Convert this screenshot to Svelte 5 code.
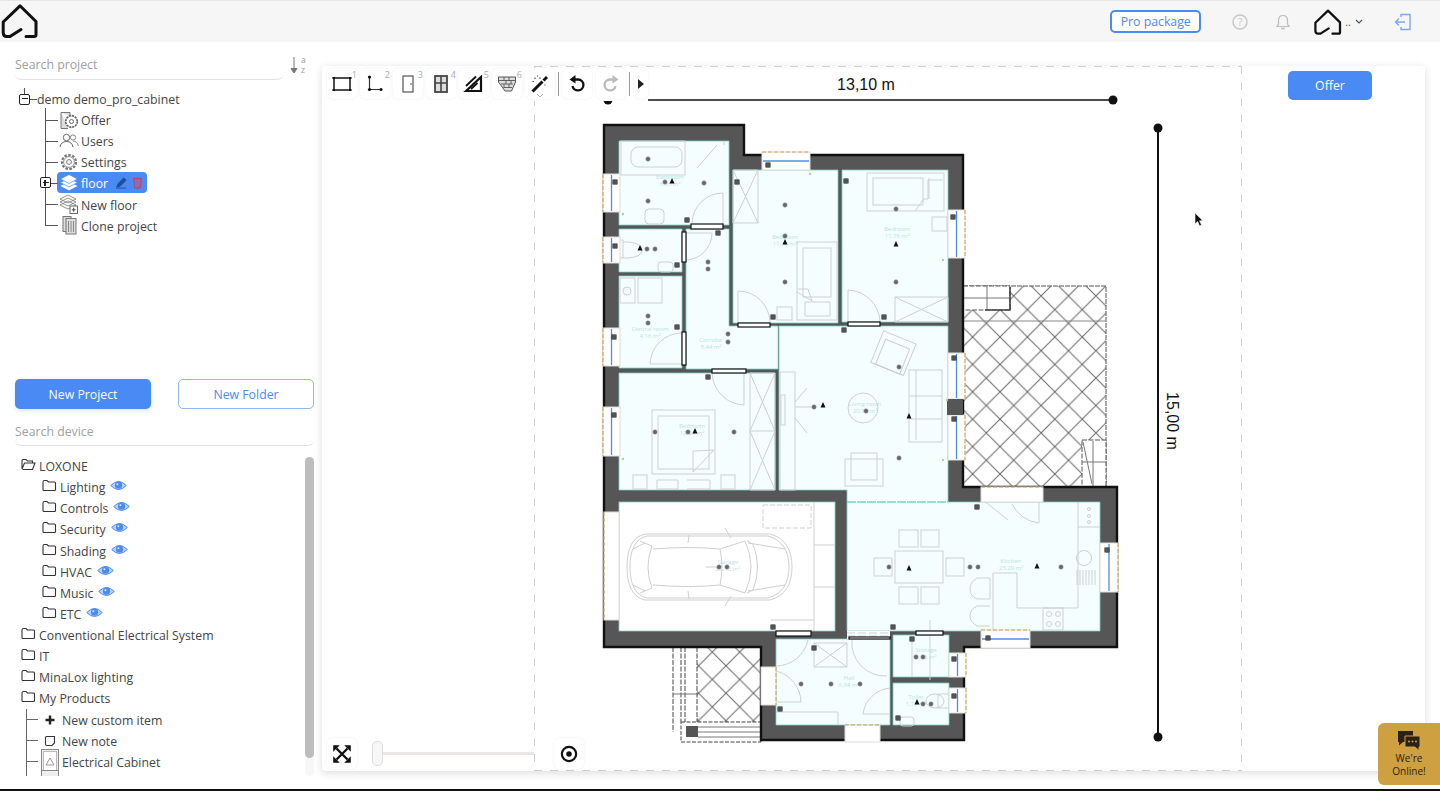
<script>
  const treeItems = [
    { label: 'Offer', icon: 'offer' },
    { label: 'Users', icon: 'users' },
    { label: 'Settings', icon: 'gear' },
    { label: 'floor', icon: 'layers', active: true },
    { label: 'New floor', icon: 'newfloor' },
    { label: 'Clone project', icon: 'clone' }
  ];
  const loxone = ['Lighting', 'Controls', 'Security', 'Shading', 'HVAC', 'Music', 'ETC'];
  const folders = ['Conventional Electrical System', 'IT', 'MinaLox lighting', 'My Products'];
  const tools = [
    { id: 'rect', n: 1 }, { id: 'corner', n: 2 }, { id: 'door', n: 3 },
    { id: 'window', n: 4 }, { id: 'ruler', n: 5 }, { id: 'brick', n: 6 }, { id: 'wand' }
  ];

  const rooms = [
    '619,141 729,141 729,225 619,225',
    '619,229 682,229 682,272 619,272',
    '619,276 682,276 682,368 619,368',
    '686,229 729,229 729,326 778,326 778,369 686,369',
    '733,170 838,170 838,323 733,323',
    '842,170 948,170 948,322 842,322',
    '619,373 775,373 775,490 619,490',
    '779,326 948,326 948,502 1100,502 1100,631 847,631 847,490 779,490',
    '776,639 890,639 890,725 776,725',
    '893,635 949,635 949,677 893,677',
    '893,683 949,683 949,725 893,725'
  ];
  const windows = [
    [603, 174, 17, 38, 'v'], [603, 237, 17, 26, 'v'], [603, 328, 17, 38, 'v'], [603, 407, 17, 49, 'v'],
    [948, 210, 17, 48, 'v'], [948, 353, 17, 46, 'v'], [948, 415, 17, 45, 'v'],
    [762, 152, 48, 18, 'h'], [1100, 543, 18, 49, 'v'], [981, 630, 49, 18, 'h'],
    [949, 653, 17, 24, 'v'], [949, 688, 17, 25, 'v'],
    [604, 512, 15, 108, ''], [981, 487, 62, 15, ''], [761, 667, 15, 38, ''], [845, 725, 35, 17, '']
  ];
  const doors = [
    [691, 224, 32, 5], [682, 232, 4, 30], [682, 332, 4, 33], [712, 369, 34, 4],
    [738, 323, 32, 4], [848, 322, 32, 4], [776, 631, 35, 5], [916, 631, 27, 4], [849, 637, 41, 2]
  ];
  const dots = [
    [648, 159], [704, 183], [648, 201], [665, 182], [785, 205], [785, 282], [896, 209], [896, 282],
    [647, 249], [655, 249], [708, 269], [708, 262], [648, 323], [648, 316], [728, 342], [728, 334],
    [655, 432], [734, 432], [688, 432], [814, 407], [866, 411], [899, 367], [899, 458], [719, 567],
    [727, 567], [889, 567], [970, 567], [978, 567], [1061, 567], [801, 684], [831, 684], [860, 684],
    [916, 657], [923, 657], [923, 704], [931, 704], [785, 236]
  ];
  const bells = [
    [672, 181], [785, 242], [896, 244], [640, 248], [695, 431], [823, 405], [909, 416], [909, 568], [1037, 566], [917, 702]
  ];
  const squares = [
    [615, 182], [615, 246], [614, 337], [614, 415], [953, 217], [954, 358], [954, 419], [768, 165],
    [687, 220], [718, 233], [737, 182], [846, 181], [677, 265], [677, 327], [773, 317], [884, 317],
    [844, 330], [708, 377], [1107, 550], [954, 659], [954, 696], [988, 638], [977, 507], [773, 627],
    [893, 627], [814, 648], [780, 709], [898, 718], [912, 639]
  ];
  const greens = [[623, 214], [810, 174], [943, 260], [623, 459], [943, 460], [947, 400]];
  const labels = [
    [670, 179, 'Bathroom'], [670, 186, '6,05 m²'], [785, 239, 'Bedroom'], [785, 246, '11,76 m²'],
    [897, 231, 'Bedroom'], [897, 238, '11,76 m²'], [650, 331, 'Central room'], [650, 338, '4,16 m²'],
    [711, 342, 'Corridor'], [711, 349, '5,44 m²'], [692, 428, 'Bedroom'], [692, 435, '12,24 m²'],
    [865, 406, 'Living room'], [865, 413, '20,10 m²'], [1011, 563, 'Kitchen'], [1011, 570, '23,29 m²'],
    [728, 564, 'Garage'], [728, 571, '22,12 m²'], [849, 680, 'Hall'], [849, 687, '6,94 m²'],
    [926, 652, 'Storage'], [926, 659, '1,92 m²'], [916, 699, 'Toilet'], [916, 706, '1,76 m²']
  ];
</script>

{#snippet folder(open)}
  <svg class="folder" viewBox="0 0 15 13" aria-hidden="true">
    {#if open}
      <path d="M1 11V2.5Q1 1.5 2 1.5H5L6.5 3H11.5V5M1 11L3.5 5H14L11.5 11.5H1.5" />
    {:else}
      <path d="M1 3Q1 1.5 2.5 1.5H5L6.5 3H12.5Q13.5 3 13.5 4V10.5Q13.5 11.5 12.5 11.5H2Q1 11.5 1 10.5Z" />
    {/if}
  </svg>
{/snippet}

{#snippet eye()}
  <svg class="eye" viewBox="0 0 17 11" aria-hidden="true">
    <path d="M.7 5.5Q8.5-2.5 16.3 5.5Q8.5 13.5.7 5.5Z" fill="#b9d3fb" stroke="#4a8af4" stroke-width="1" />
    <circle cx="8.5" cy="5.2" r="3.6" fill="#4a8af4" />
    <circle cx="7.4" cy="4.2" r="1" fill="#dce9fe" />
  </svg>
{/snippet}

{#snippet logo(size)}
  <svg width={size} height={size} viewBox="0 0 40 40" aria-hidden="true">
    <path d="M26 35.5H34Q36 35.5 36 33.5V20.5L20 4.8L3.2 21V31.5Q3.2 35.5 7 35.5H10L21 28.5" fill="none" stroke="#111" stroke-width="3" stroke-linecap="round" stroke-linejoin="round" />
  </svg>
{/snippet}

{#snippet treeIcon(kind)}
  <svg class="ticon" viewBox="0 0 20 20" aria-hidden="true">
    {#if kind === 'offer'}
      <path d="M2 2.5H11V6M2 2.5V18.5H9" fill="#ddd" stroke="#777" />
      <circle cx="12.5" cy="11.5" r="5.8" fill="#fff" stroke="#666" stroke-width="1.7" stroke-dasharray="2.2 .8" />
      <circle cx="12.5" cy="11.5" r="2" fill="none" stroke="#666" />
    {:else if kind === 'users'}
      <circle cx="7.5" cy="6.5" r="3.2" fill="none" stroke="#666" />
      <path d="M1 16Q2 10.5 7.5 10.5T14 16" fill="none" stroke="#666" />
      <circle cx="14" cy="6.5" r="2.6" fill="none" stroke="#888" />
      <path d="M14 10Q18 10 19.5 15" fill="none" stroke="#888" />
    {:else if kind === 'gear'}
      <circle cx="10" cy="10" r="7" fill="none" stroke="#777" stroke-width="2.2" stroke-dasharray="2.6 1.4" />
      <circle cx="10" cy="10" r="5.4" fill="none" stroke="#777" stroke-width=".8" />
      <circle cx="10" cy="10" r="2.4" fill="none" stroke="#777" />
    {:else if kind === 'layers'}
      <path d="M1.5 13L10 17.5L18.5 13L10 8.5Z" fill="#fff" />
      <path d="M1.5 9.5L10 14L18.5 9.5L10 5Z" fill="#fff" stroke="#4a8af4" stroke-width=".7" />
      <path d="M1.5 6L10 10.5L18.5 6L10 1.5Z" fill="#fff" stroke="#4a8af4" stroke-width=".7" />
    {:else if kind === 'newfloor'}
      <path d="M1 11L9 15L17 11L9 7Z M1 8L9 12L17 8L9 4Z M1 5L9 9L17 5L9 1Z" fill="#fff" stroke="#777" stroke-width=".8" />
      <rect x="11" y="12" width="7.5" height="7.5" fill="#fff" stroke="#666" />
      <path d="M14.7 13.8V17.8M12.8 15.8H16.6" stroke="#444" />
    {:else}
      <rect x="4" y="1.5" width="8" height="15" fill="#ddd" stroke="#777" />
      <rect x="7" y="3.5" width="10" height="15.5" fill="#ddd" stroke="#777" />
      <path d="M9.5 6V17M12 6V17M14.5 6V17" stroke="#888" />
    {/if}
  </svg>
{/snippet}

{#snippet toolIcon(id)}
  <svg class="tool-svg" viewBox="0 0 22 22" aria-hidden="true">
    {#if id === 'rect'}
      <rect x="3" y="5" width="16" height="12" fill="none" stroke="#222" stroke-width="1.6" />
      <path d="M1.5 5H4M18 5H20.5M1.5 17H4M18 17H20.5" stroke="#111" stroke-width="2" />
    {:else if id === 'corner'}
      <path d="M5.5 4V16.5H17" fill="none" stroke="#333" stroke-width="1.2" />
      <circle cx="5.5" cy="4" r="1.6" fill="#111" /><circle cx="5.5" cy="16.5" r="1.6" fill="#111" /><circle cx="17" cy="16.5" r="1.6" fill="#111" />
    {:else if id === 'door'}
      <rect x="6" y="3" width="10" height="16" fill="none" stroke="#444" stroke-width="1.1" />
      <circle cx="14" cy="11" r=".8" fill="#333" />
    {:else if id === 'window'}
      <rect x="5" y="3" width="12" height="16" fill="#ddd" stroke="#444" stroke-width="1.8" />
      <path d="M11 3V19M5 10H17" stroke="#444" stroke-width="1.6" />
    {:else if id === 'ruler'}
      <path d="M3 18L18 4V18Z" fill="none" stroke="#111" stroke-width="2.2" />
      <path d="M3 13L13 3.5M8 16L14.5 10" stroke="#111" stroke-width="1.8" />
    {:else if id === 'brick'}
      <path d="M2.5 4H19.5V9L15.5 18H9L2.5 9Z" fill="#ddd" stroke="#555" />
      <path d="M3 7.5H19M5 11H17M7.5 14.5H16M8 4V7.5M13 4V7.5M10 7.5V11M15 7.5V11M8 11V14.5M13 11V14.5" stroke="#555" stroke-width=".9" />
    {:else if id === 'wand'}
      <path d="M3.5 18.5L13.5 8.5" stroke="#111" stroke-width="3" />
      <path d="M14.5 7.5L18 4" stroke="#111" stroke-width="3" />
      <path d="M6 4.5V6M8.5 2.5V3.5M11 4.5V6M3.5 8.5H5M16 11.5V12.5" stroke="#444" stroke-width="1.1" />
    {:else if id === 'undo'}
      <path d="M7.5 6.5H12.5A5.5 5.5 0 1 1 6.5 13" fill="none" stroke="#111" stroke-width="2.3" />
      <path d="M9.5 2L3.5 6.5L9.5 10.5Z" fill="#111" />
    {:else if id === 'redo'}
      <path d="M14.5 6.5H9.5A5.5 5.5 0 1 0 15.5 13" fill="none" stroke="#bbb" stroke-width="2.3" />
      <path d="M12.5 2L18.5 6.5L12.5 10.5Z" fill="#bbb" />
    {/if}
  </svg>
{/snippet}

<div class="page">
  <header class="topbar">
    <div class="brand">{@render logo(40)}</div>
    <div class="top-actions">
      <button class="pro">Pro package</button>
      <svg class="help" viewBox="0 0 16 16" aria-hidden="true">
        <circle cx="8" cy="8" r="7" fill="none" stroke="#c6c6c6" stroke-width="1.4" />
        <text x="8" y="11.6" text-anchor="middle">?</text>
      </svg>
      <svg class="bell" viewBox="0 0 16 16" aria-hidden="true">
        <path d="M8 1.5Q3.8 1.5 3.5 6V10L2 12.5H14L12.5 10V6Q12.2 1.5 8 1.5ZM6.3 14Q8 15.5 9.7 14" fill="none" stroke="#bbb" stroke-width="1.2" />
      </svg>
      <div class="user">{@render logo(30)}<span class="dots">..</span>
        <svg class="chev" viewBox="0 0 8 5" aria-hidden="true"><path d="M1 1L4 4L7 1" fill="none" stroke="#555" stroke-width="1.2" /></svg>
      </div>
      <svg class="exit" viewBox="0 0 18 18" aria-hidden="true">
        <path d="M7 4V1.5H16V16.5H7V14" fill="none" stroke="#7aa9f2" stroke-width="1.4" />
        <path d="M11 9H2M5 5.5L1.5 9L5 12.5" fill="none" stroke="#7aa9f2" stroke-width="1.4" />
      </svg>
    </div>
  </header>

  <main class="main">
    <aside class="sidebar">
      <section class="project">
        <div class="search-row">
          <div class="search">Search project</div>
          <div class="sort">
            <svg viewBox="0 0 10 20" aria-hidden="true"><path d="M4 2V17M1 13.5L4 18L7 13.5Z" fill="#777" stroke="#777" /></svg>
            <span><i>a</i><i>z</i></span>
          </div>
        </div>
        <div class="root-row">
          <span class="box minus"></span><span class="hline"></span><span class="hline2"></span>
          <span class="txt">demo demo_pro_cabinet</span>
        </div>
        <ul class="tree">
          {#each treeItems as item}
            <li>
              {#if item.active}<span class="box plus"></span>{/if}
              <span class="node" class:active={item.active}>
                {@render treeIcon(item.icon)}
                <span class="txt">{item.label}</span>
                {#if item.active}
                  <svg class="mini" viewBox="0 0 14 14" aria-hidden="true"><path d="M2 12L3 8.5L9.5 2L12 4.5L5.5 11ZM1 13H12" fill="#1f4f96" stroke="#1f4f96" /></svg>
                  <svg class="mini" viewBox="0 0 14 14" aria-hidden="true"><path d="M3 3H11L10 13H4ZM2 2.5H12" fill="#8d6ea8" stroke="#c2415e" /></svg>
                {/if}
              </span>
            </li>
          {/each}
        </ul>
      </section>

      <div class="btns">
        <button class="primary">New Project</button>
        <button class="outline">New Folder</button>
      </div>
      <div class="search device-search">Search device</div>

      <div class="devices">
        <div class="scroll-track"><div class="scroll-thumb"></div></div>
        <div class="drow">{@render folder(true)}<span class="txt">LOXONE</span></div>
        {#each loxone as name}
          <div class="drow sub">{@render folder(false)}<span class="txt">{name}</span>{@render eye()}</div>
        {/each}
        {#each folders as name}
          <div class="drow">{@render folder(false)}<span class="txt">{name}</span></div>
        {/each}
        <ul class="products">
          <li>
            <svg class="pi" viewBox="0 0 12 12" aria-hidden="true"><path d="M6 1.5V10.5M1.5 6H10.5" stroke="#222" stroke-width="2.4" /></svg>
            <span class="txt">New custom item</span>
          </li>
          <li>
            <svg class="pi" viewBox="0 0 12 12" aria-hidden="true"><path d="M2.5 1.5H10.5V8L8 10.5H3Q1.5 10.5 1.5 9V2.5Q1.5 1.5 2.5 1.5Z" fill="none" stroke="#333" stroke-width="1.1" /></svg>
            <span class="txt">New note</span>
          </li>
          <li>
            <svg class="pi cab" viewBox="0 0 18 26" aria-hidden="true">
              <rect x=".5" y=".5" width="17" height="25" fill="#eee" stroke="#888" />
              <rect x="2.5" y="2.5" width="13" height="20" fill="#fff" stroke="#bbb" />
              <path d="M9 9L13 16H5Z" fill="none" stroke="#999" />
            </svg>
            <span class="txt">Electrical Cabinet</span>
          </li>
          <li>
            <svg class="pi cab" viewBox="0 0 18 26" aria-hidden="true"><rect x=".5" y=".5" width="17" height="25" fill="#eee" stroke="#888" /></svg>
          </li>
        </ul>
      </div>
    </aside>

    <section class="canvas">
      <svg class="plan" viewBox="322 66 1103 705" aria-label="Floor plan">
        <defs>
          <pattern id="tile" x="1000" y="337" width="27.4" height="27.4" patternUnits="userSpaceOnUse">
            <path d="M0 0L27.4 27.4M27.4 0L0 27.4" stroke="#666" stroke-width="1" />
          </pattern>
        </defs>

        <!-- page limits -->
        <path d="M534.5 66V771M1241.5 66V771M534 66.5H1241M534 770.5H1241" fill="none" stroke="#d0d0d0" stroke-dasharray="8 8" />

        <!-- terraces -->
        <rect x="963" y="286" width="143" height="201" fill="url(#tile)" stroke="#555" stroke-dasharray="5 1" />
        <path d="M963 321H1106" stroke="#888" />
        <rect x="963" y="286" width="47" height="24" fill="#fff" stroke="#555" stroke-dasharray="5 1.5" />
        <path d="M987 285V310M963 298H1010" stroke="#777" />
        <path d="M1010 287V310H985" fill="none" stroke="#444" stroke-width="1.6" />
        <rect x="1082" y="440" width="24" height="47" fill="#fff" stroke="#555" stroke-dasharray="5 1.5" />
        <path d="M1082 462H1107M1093 441V487M1083 442L1092 484" stroke="#777" />

        <rect x="697" y="647" width="64" height="75" fill="url(#tile)" />
        <path d="M673 647V732M681 647V722M685 647V722M697 647V722" stroke="#444" stroke-dasharray="5 1.5" fill="none" />
        <path d="M673 694H697" stroke="#777" />
        <rect x="681" y="722" width="80" height="20" fill="#fff" stroke="#444" stroke-dasharray="4 1.5" />
        <path d="M698 727H761M698 732H761M698 737H761" stroke="#777" />
        <rect x="686" y="726" width="12" height="11" fill="#555" />

        <!-- walls -->
        <polygon points="604,125 744,125 744,155 963,155 963,487 1117,487 1117,647 964,647 964,740 761,740 761,647 604,647" fill="#565656" stroke="#111" stroke-width="2.4" />

        <!-- rooms -->
        {#each rooms as r}
          <polygon points={r} fill="#f5fefe" stroke="#7ecfc8" stroke-width=".8" />
        {/each}
        <rect x="619" y="502" width="216" height="129" fill="#fff" stroke="#7ecfc8" stroke-width=".8" />
        <rect x="847" y="631" width="43" height="8" fill="#fbfefe" />
        <path d="M847 502H948" stroke="#7ecfc8" stroke-width="1.4" stroke-dasharray="9 1" />

        <!-- furniture -->
        <g fill="none" stroke="#cfcfcf" stroke-width="1">
          <rect x="621" y="141" width="64" height="34" />
          <rect x="631" y="147" width="51" height="20" rx="7" />
          <path d="M697 168L717 145M724 145V141" />
          <rect x="645" y="209" width="19" height="15" rx="4" />
          <path d="M723 193A31 31 0 0 0 692 223M723 193V224M712 233A27 27 0 0 1 686 260M686 233H712M682 333A32 32 0 0 0 650 364H682" />
          <path d="M733 170H758V223H733ZM733 223L758 170M733 170L758 223" />
          <rect x="797" y="242" width="40" height="78" /><rect x="803" y="248" width="28" height="49" />
          <path d="M798 289H808L812 301L797 292M805 302H830V316H805Z" />
          <rect x="777" y="307" width="15" height="13" />
          <path d="M738 291A32 32 0 0 1 770 323M738 291V323" />
          <rect x="867" y="173" width="77" height="38" /><rect x="873" y="178" width="50" height="27" />
          <path d="M915 211L924 199H928V180H943M929 199V178" />
          <path d="M895 297H948V322H895ZM895 297L948 322M895 322L948 297" />
          <rect x="932" y="217" width="15" height="14" />
          <path d="M848 290A33 33 0 0 1 880 322M848 290V322" />
          <rect x="620" y="278" width="15" height="25" /><circle cx="627" cy="291" r="4" /><rect x="638" y="278" width="24" height="25" />
          <path d="M620 240H623V258H620M623 242H628Q642 243 642 250Q642 257 628 258H623" />
          <rect x="658" y="262" width="15" height="10" rx="3" />
          <rect x="652" y="410" width="63" height="64" /><rect x="658" y="416" width="51" height="53" />
          <path d="M693 472L693 451L714 450ZM657 480H678V489H657ZM687 480H710V489H687" />
          <rect x="633" y="475" width="14" height="14" /><rect x="721" y="475" width="14" height="14" />
          <path d="M750 373H775V490H750ZM750 431H775M750 373L775 431M775 373L750 431M750 431L775 490M775 431L750 490" />
          <path d="M712 373A33 33 0 0 0 744 405V373" />
          <rect x="909" y="370" width="33" height="72" /><path d="M916 370V440M909 396H942M909 419H942" />
          <rect x="780" y="372" width="15" height="118" /><rect x="781" y="395" width="4" height="30" />
          <path d="M795 402L807 388M795 418L807 433M795 407H814" />
          <g transform="rotate(22 893 353)"><rect x="876" y="336" width="35" height="34" /><rect x="881" y="343" width="26" height="27" /></g>
          <circle cx="863" cy="408" r="15" />
          <rect x="845" y="459" width="38" height="27" /><rect x="851" y="453" width="26" height="27" />
          <rect x="895" y="551" width="48" height="32" />
          <rect x="899" y="530" width="19" height="17" /><rect x="921" y="530" width="18" height="17" />
          <rect x="899" y="587" width="19" height="17" /><rect x="921" y="587" width="18" height="17" />
          <rect x="874" y="558" width="18" height="18" /><rect x="946" y="558" width="18" height="18" />
          <path d="M993 631V573H1017V608H1078V502M1078 527H1100M993 631" />
          <path d="M990 578H977Q970 582 970 589Q970 596 977 599H990ZM990 606H977Q970 609 970 616Q970 622 977 626H990" />
          <rect x="1043" y="608" width="20" height="22" />
          <circle cx="1049" cy="614" r="2.5" /><circle cx="1058" cy="614" r="2.5" /><circle cx="1049" cy="624" r="2.5" /><circle cx="1058" cy="624" r="2.5" />
          <circle cx="1084" cy="558" r="7.5" />
          <path d="M1080 570V585M1083 570V585M1086 570V585M1089 570V585M1092 570V585M1095 570V585M1077 570V585" />
          <circle cx="1089" cy="509" r="1.5" /><circle cx="1089" cy="516" r="1.5" /><circle cx="1089" cy="522" r="1.5" />
          <path d="M983 500L1008 520M1012 504A34 34 0 0 0 1039 523V502M1022 630V640" />
          <path d="M814 643H847V667H814ZM814 643L847 667M847 643L814 667" />
          <path d="M776 671A33 33 0 0 1 801 702H776M808 640A33 33 0 0 1 776 666M852 640A33 33 0 0 0 887 676M890 688A30 30 0 0 0 863 714H890M776 712H838V725" />
          <path d="M912 639V677M930 620V680" />
          <path d="M950 708H938V694H950" /><ellipse cx="935" cy="701" rx="9" ry="7" />
          <rect x="900" y="717" width="14" height="9" rx="3" />
          <path d="M814 502V631M814 545H835M814 587H835M771 620H814" />
          <rect x="763" y="505" width="48" height="23" stroke-dasharray="5 2" />
          <path d="M847 633H890M847 636H890" stroke-dasharray="8 3" />
          <!-- car -->
          <path d="M645 534H770Q792 540 792 567Q792 594 770 600H645Q627 596 627 567Q627 538 645 534Z" />
          <path d="M647 536H768Q789 542 789 567Q789 592 768 598H647Q630 594 630 567Q630 540 647 536Z" />
          <path d="M653 549Q690 546 720 549Q724 567 720 585Q690 588 653 585" />
          <path d="M652 546Q644 567 652 588" />
          <path d="M720 549L745 541Q757 567 745 593L720 585" />
          <path d="M748 543L785 549M748 591L785 585M747 541L753 544Q762 567 753 590L747 593" />
          <path d="M725 528L731 538M725 606L731 596M689 535L688 543M689 599L688 591M633 549L645 543M633 585L645 591M652 546L640 541M652 588L640 593" />
          <path d="M706 567H717" />
        </g>

        <!-- openings -->
        {#each windows as w}
          <rect x={w[0]} y={w[1]} width={w[2]} height={w[3]} fill="#fff" stroke="#dcdcd4" stroke-width="1" />
          {#if w[4] === 'v'}
            <path d="M{w[0] + w[2] / 2} {w[1] + 1}V{w[1] + w[3] - 1}" stroke="#4a90e2" stroke-width="1.3" />
          {:else if w[4] === 'h'}
            <path d="M{w[0] + 1} {w[1] + w[3] / 2}H{w[0] + w[2] - 1}" stroke="#4a90e2" stroke-width="1.3" />
          {/if}
          {#if w[2] < w[3]}
            <path d="M{w[0] < 700 ? w[0] : w[0] + w[2]} {w[1]}v{w[3]}" stroke="#c9a24e" stroke-dasharray="4 2" />
          {:else}
            <path d="M{w[0]} {w[1]}h{w[2]}" stroke="#c9a24e" stroke-dasharray="4 2" />
          {/if}
        {/each}
        {#each doors as d}
          <rect x={d[0]} y={d[1]} width={d[2]} height={d[3]} fill="#fff" stroke="#111" stroke-width="1.2" />
        {/each}
        <rect x="947" y="399" width="16" height="16" fill="#565656" />

        <!-- devices -->
        {#each labels as l}
          <text class="room-label" x={l[0]} y={l[1]}>{l[2]}</text>
        {/each}
        {#each greens as g}
          <circle cx={g[0]} cy={g[1]} r="1.2" fill="#a5d98a" />
        {/each}
        {#each dots as d}
          <circle cx={d[0]} cy={d[1]} r="2.2" fill="#666" stroke="#999" stroke-width=".6" />
        {/each}
        {#each bells as b}
          <path d="M{b[0] - 2.5} {b[1] + 2.5}L{b[0]} {b[1] - 3}L{b[0] + 2.5} {b[1] + 2.5}Z" fill="#111" />
        {/each}
        {#each squares as s}
          <rect x={s[0] - 2.2} y={s[1] - 2.2} width="4.4" height="4.4" fill="#555" stroke="#222" stroke-width=".5" />
        {/each}

        <!-- dimensions -->
        <path d="M608 100H1113" stroke="#111" stroke-width="1.6" />
        <circle cx="608" cy="100" r="4.5" fill="#111" /><circle cx="1113" cy="100" r="4.5" fill="#111" />
        <text class="dim" x="866" y="90">13,10 m</text>
        <path d="M1158 128V737" stroke="#111" stroke-width="2" />
        <circle cx="1158" cy="128" r="4.5" fill="#111" /><circle cx="1158" cy="737" r="4.5" fill="#111" />
        <text class="dim" transform="translate(1167 421) rotate(90)">15,00 m</text>
      </svg>

      <div class="toolbar">
        {#each tools as t}
          <div class="tool">
            {@render toolIcon(t.id)}
            {#if t.n}<sup>{t.n}</sup>{/if}
            {#if t.id === 'wand'}
              <svg class="caret" viewBox="0 0 8 5" aria-hidden="true"><path d="M1 1L4 4L7 1" fill="none" stroke="#aaa" /></svg>
            {/if}
          </div>
        {/each}
        <span class="sep"></span>
        <div class="tool">{@render toolIcon('undo')}</div>
        <div class="tool redo">{@render toolIcon('redo')}</div>
        <span class="sep"></span>
        <div class="tool narrow"><svg viewBox="0 0 8 12" width="8" height="12" aria-hidden="true"><path d="M1 1L7 6L1 11Z" fill="#222" /></svg></div>
      </div>

      <button class="offer">Offer</button>

      <div class="zoombar">
        <div class="tool">
          <svg class="tool-svg" viewBox="0 0 20 20" aria-hidden="true">
            <path d="M5 5L15 15M15 5L5 15" stroke="#111" stroke-width="2.2" />
            <path d="M2 2H8L2 8ZM18 2H12L18 8ZM2 18H8L2 12ZM18 18H12L18 12Z" fill="#111" />
          </svg>
        </div>
        <div class="slider"><span class="thumb"></span><span class="rail"></span></div>
        <div class="tool">
          <svg class="tool-svg" viewBox="0 0 20 20" aria-hidden="true">
            <circle cx="10" cy="10" r="6.5" fill="none" stroke="#111" stroke-width="2" />
            <circle cx="10" cy="10" r="2.5" fill="#111" />
          </svg>
        </div>
      </div>

      <svg class="cursor" viewBox="0 0 10 16" aria-hidden="true">
        <path d="M1 1V12L3.7 9.6L5.5 14L7.5 13L5.6 8.8H9Z" fill="#111" stroke="#fff" stroke-width=".6" />
      </svg>
    </section>
  </main>

  <aside class="chat">
    <svg viewBox="0 0 24 22" width="24" height="22" aria-hidden="true">
      <path d="M1 1H16V12H6L2 15.5V12H1Z" fill="#2a2215" />
      <path d="M8 6H23V17H22V20.5L18 17H8Z" fill="#2a2215" stroke="#cfa040" />
      <circle cx="12" cy="11.5" r="1" fill="#cfa040" /><circle cx="15.5" cy="11.5" r="1" fill="#cfa040" /><circle cx="19" cy="11.5" r="1" fill="#cfa040" />
    </svg>
    <span>We're<br />Online!</span>
  </aside>
</div>

<style>
  :global(body) {
    margin: 0;
    background: #fff;
    overflow: hidden;
  }
  .page {
    position: relative;
    display: flex;
    flex-direction: column;
    height: 791px;
    border-bottom: 2px solid #111;
    box-sizing: border-box;
    font-family: "Open Sans", sans-serif;
    font-size: 12.3px;
    color: #444;
    overflow: hidden;
  }
  .topbar {
    display: flex;
    align-items: center;
    height: 42px;
    flex: none;
    background: #f6f6f6;
    border-top: 1px solid #e6e6e6;
    box-sizing: border-box;
  }
  .brand { display: flex; margin-top: -1px; }
  .top-actions {
    display: flex;
    align-items: center;
    margin-left: auto;
    padding-right: 28px;
  }
  button {
    font-family: inherit;
    cursor: pointer;
    box-sizing: border-box;
  }
  .pro {
    width: 91px;
    height: 23px;
    padding: 0;
    margin-right: 31px;
    border: 2px solid #4a8af4;
    border-radius: 5px;
    background: #fff;
    color: #4a8af4;
    font-size: 12.3px;
    font-weight: 500;
  }
  .help { width: 16px; height: 16px; margin-right: 27px; }
  .help text { font-size: 11px; fill: #c6c6c6; font-family: "Open Sans", sans-serif; }
  .bell { width: 16px; height: 16px; margin-right: 22px; }
  .user { display: flex; align-items: center; margin-right: 31px; }
  .dots { font-size: 11px; line-height: 1; margin: 0 4px 0 2px; color: #666; }
  .chev { width: 8px; height: 5px; }
  .exit { width: 18px; height: 18px; }

  .main { display: flex; flex: 1; min-height: 0; }
  .sidebar {
    display: flex;
    flex-direction: column;
    flex: none;
    width: 322px;
    box-sizing: border-box;
    padding: 13px 8px 0 15px;
  }
  .project { height: 324px; flex: none; }
  .search-row { display: flex; align-items: flex-start; }
  .search {
    box-sizing: border-box;
    flex: 1;
    height: 25px;
    line-height: 20px;
    color: #a0a0a0;
    border-bottom: 1px solid #dfe3e6;
    border-radius: 0 0 6px 6px;
  }
  .sort {
    display: flex;
    width: 24px;
    margin-left: 7px;
    color: #999;
    font-size: 8.5px;
  }
  .sort svg { width: 10px; height: 20px; }
  .sort span { display: flex; flex-direction: column; margin-left: 1px; }
  .sort i { font-style: normal; line-height: 10px; }
  .txt { margin-top: 2px; }
  .root-row {
    position: relative;
    display: flex;
    align-items: center;
    height: 20.1px;
    margin-top: 9px;
    padding-left: 22px;
    line-height: 20px;
  }
  .box {
    position: absolute;
    width: 11px;
    height: 11px;
    box-sizing: border-box;
    border: 1.5px solid #222;
    border-radius: 2px;
    background: #fff;
    z-index: 1;
  }
  .minus { left: 4px; top: 4.5px; }
  .minus::before, .plus::before, .plus::after {
    content: "";
    position: absolute;
    background: #222;
  }
  .minus::before, .plus::before { left: 1.5px; right: 1.5px; top: 3.4px; height: 1.2px; }
  .plus::after { top: 1.5px; bottom: 1.5px; left: 3.4px; width: 1.2px; }
  .plus { left: -5px; top: 5px; }
  .hline {
    position: absolute;
    left: 9px;
    top: -1px;
    width: 1px;
    height: 6px;
    background: #555;
  }
  .hline2 {
    position: absolute;
    left: 15px;
    top: 10px;
    width: 7px;
    height: 1px;
    background: #555;
  }
  .tree {
    list-style: none;
    margin: 0 0 0 30px;
    padding: 0;
  }
  .tree li {
    position: relative;
    display: flex;
    align-items: center;
    height: 21.1px;
    padding-left: 12px;
  }
  .tree li::before {
    content: "";
    position: absolute;
    left: 0;
    top: -1px;
    width: 12px;
    height: 11.5px;
    border-left: 1.4px solid #555;
    border-bottom: 1.4px solid #555;
  }
  .tree li:not(:last-child)::after {
    content: "";
    position: absolute;
    left: 0;
    top: 10px;
    bottom: 0;
    border-left: 1.4px solid #555;
  }
  .node {
    display: flex;
    align-items: center;
    height: 21px;
    padding: 0 3px 0 2px;
    border-radius: 4px;
    color: #444;
  }
  .node.active {
    background: #4a8af4;
    color: #fff;
  }
  .ticon { width: 20px; height: 20px; margin-right: 2px; }
  .mini { width: 13px; height: 13px; margin-left: 7px; }
  .mini + .mini { margin-left: 3px; }

  .btns { display: flex; justify-content: space-between; flex: none; }
  .btns button {
    width: 136px;
    height: 30px;
    padding: 0;
    font-size: 12.3px;
    border-radius: 5px;
    font-weight: 500;
  }
  .primary {
    background: #4a8af4;
    color: #fff;
    border: 0;
    box-shadow: 0 2px 4px rgba(74, 138, 244, .2);
  }
  .outline {
    background: #fff;
    color: #4a8af4;
    border: 1.4px solid #8fb6f5;
  }
  .device-search { flex: none; height: 24px; margin-top: 13px; }
  .devices {
    position: relative;
    height: 321px;
    margin-top: 9px;
    overflow: hidden;
    flex: none;
  }
  .scroll-track {
    position: absolute;
    right: 0;
    top: 2px;
    bottom: 0;
    width: 9px;
    border-radius: 5px;
    background: #f7f7f7;
  }
  .scroll-thumb { height: 301px; border-radius: 5px; background: #bdbdbd; }
  .drow {
    display: flex;
    align-items: center;
    height: 21.14px;
    padding-left: 6px;
    color: #444;
  }
  .drow.sub { padding-left: 27px; }
  .folder {
    width: 15px;
    height: 13px;
    flex: none;
    margin: -2px 3px 0 0;
    fill: none;
    stroke: #333;
    stroke-width: 1.1;
  }
  .eye { width: 17px; height: 11px; margin: -2px 0 0 5px; }
  .products {
    list-style: none;
    margin: 0 0 0 11px;
    padding: 0;
  }
  .products li {
    position: relative;
    display: flex;
    align-items: center;
    height: 21.14px;
    padding-left: 36px;
  }
  .products li::before {
    content: "";
    position: absolute;
    left: 0;
    top: 0;
    bottom: 0;
    border-left: 1.2px solid #666;
  }
  .products li::after {
    content: "";
    position: absolute;
    left: 0;
    top: 10px;
    width: 12px;
    border-top: 1.2px solid #666;
  }
  .pi {
    position: absolute;
    left: 18px;
    top: 5px;
    width: 12px;
    height: 12px;
  }
  .pi.cab { left: 15px; top: -2px; width: 18px; height: 26px; }

  .canvas {
    position: relative;
    flex: none;
    width: 1103px;
    height: 705px;
    margin-top: 24px;
    background: #fff;
    border-radius: 4px;
    box-shadow: 0 2px 8px rgba(0, 0, 0, .14);
  }
  .plan {
    position: absolute;
    left: 0;
    top: 0;
    width: 1103px;
    height: 705px;
  }
  .room-label {
    font-size: 6px;
    fill: #b9e3df;
    text-anchor: middle;
    font-family: "Open Sans", sans-serif;
  }
  .dim {
    font-family: "Liberation Sans", sans-serif;
    font-size: 16px;
    fill: #111;
    text-anchor: middle;
  }
  .toolbar {
    position: absolute;
    left: 5px;
    top: 2px;
    display: flex;
    align-items: flex-start;
    gap: 3px;
    height: 33px;
    background: #fff;
  }
  .tool {
    position: relative;
    display: flex;
    align-items: center;
    justify-content: center;
    width: 30px;
    height: 31px;
    background: #fff;
    border-radius: 6px;
    box-shadow: 0 0 3px rgba(0, 0, 0, .07);
  }
  .tool.redo { margin-left: 1px; }
  .tool.narrow { width: 14px; margin-left: 1px; }
  .tool-svg { width: 22px; height: 22px; }
  .tool sup {
    position: absolute;
    right: 0;
    top: 2px;
    font-size: 9px;
    line-height: 1;
    color: #aaa;
  }
  .caret {
    position: absolute;
    bottom: 1px;
    left: 11px;
    width: 8px;
    height: 5px;
  }
  .sep { width: 1px; height: 24px; margin-top: 4px; background: #999; }
  .offer {
    position: absolute;
    right: 53px;
    top: 5px;
    width: 84px;
    height: 29px;
    padding: 0;
    border: 0;
    border-radius: 5px;
    background: #4a8af4;
    color: #fff;
    font-size: 12.3px;
    font-weight: 500;
  }
  .zoombar {
    position: absolute;
    left: 5px;
    top: 672px;
    display: flex;
    align-items: center;
    width: 257px;
  }
  .slider {
    display: flex;
    align-items: center;
    flex: 1;
    margin-left: 15px;
    margin-right: 20px;
  }
  .thumb {
    width: 11px;
    height: 25px;
    flex: none;
    box-sizing: border-box;
    border: 1.2px solid #ddd;
    border-radius: 5px;
    background: #f7f7f7;
  }
  .rail { flex: 1; height: 3px; background: #ebe7e7; }
  .cursor {
    position: absolute;
    left: 872px;
    top: 146px;
    width: 10px;
    height: 16px;
  }
  .chat {
    position: absolute;
    right: 0;
    top: 723px;
    display: flex;
    flex-direction: column;
    align-items: center;
    box-sizing: border-box;
    width: 62px;
    height: 62px;
    padding-top: 7px;
    background: #cfa040;
    border-radius: 6px 0 0 6px;
    color: #2a2215;
    font-size: 10px;
    line-height: 13px;
    text-align: center;
  }
</style>
